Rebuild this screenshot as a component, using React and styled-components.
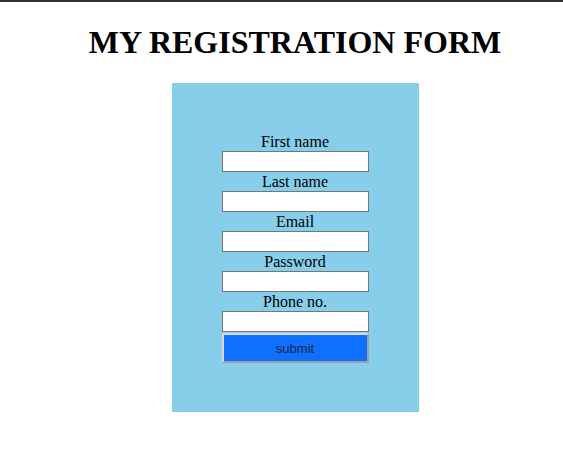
import React from 'react'
import styled, { createGlobalStyle } from 'styled-components'

const GlobalStyle = createGlobalStyle`
html, body {
    margin:0;
    padding:0;
    background:#ffffff;
}
body {
    border-top:2px solid #3a2b34;
    font-family:"Liberation Serif", "Times New Roman", serif;
}
`

const fields = ['First name', 'Last name', 'Email', 'Password', 'Phone no.']

export default function App() {
    return (<>
        <GlobalStyle/>
        <Page>
            <Title>MY REGISTRATION FORM</Title>
            <FormPanel onSubmit={e => e.preventDefault()}>
                {fields.map(f => (
                    <Field key={f}>
                        <Label>{f}</Label>
                        <Input type={f === 'Password' ? 'password' : 'text'}/>
                    </Field>
                ))}
                <SubmitButton type="submit">submit</SubmitButton>
            </FormPanel>
        </Page>
    </>)
}

const Page = styled.div`
display:flex;
flex-direction:column;
align-items:center;
padding-left:27px;
`

const Title = styled.h1`
margin:22px 0 22px;
font-size:32px;
line-height:37px;
font-weight:700;
color:#000;
`

const FormPanel = styled.form`
width:247px;
height:329px;
box-sizing:border-box;
background:#87ceeb;
display:flex;
flex-direction:column;
align-items:center;
padding-top:49px;
`

const Field = styled.div`
display:flex;
flex-direction:column;
align-items:center;
`

const Label = styled.label`
font-size:16px;
line-height:19px;
color:#000;
`

const Input = styled.input`
width:147px;
height:21px;
box-sizing:border-box;
margin:0;
border:1px solid #767676;
background:#fff;
padding:1px 2px;
`

const SubmitButton = styled.button`
width:147px;
height:30px;
box-sizing:border-box;
margin-top:1px;
background:#1070ff;
border:2px solid;
border-color:#d8d8d8 #a0a0a0 #a0a0a0 #d8d8d8;
font-family:"Liberation Sans", Arial, sans-serif;
font-size:13px;
color:#16264a;
cursor:pointer;
`
